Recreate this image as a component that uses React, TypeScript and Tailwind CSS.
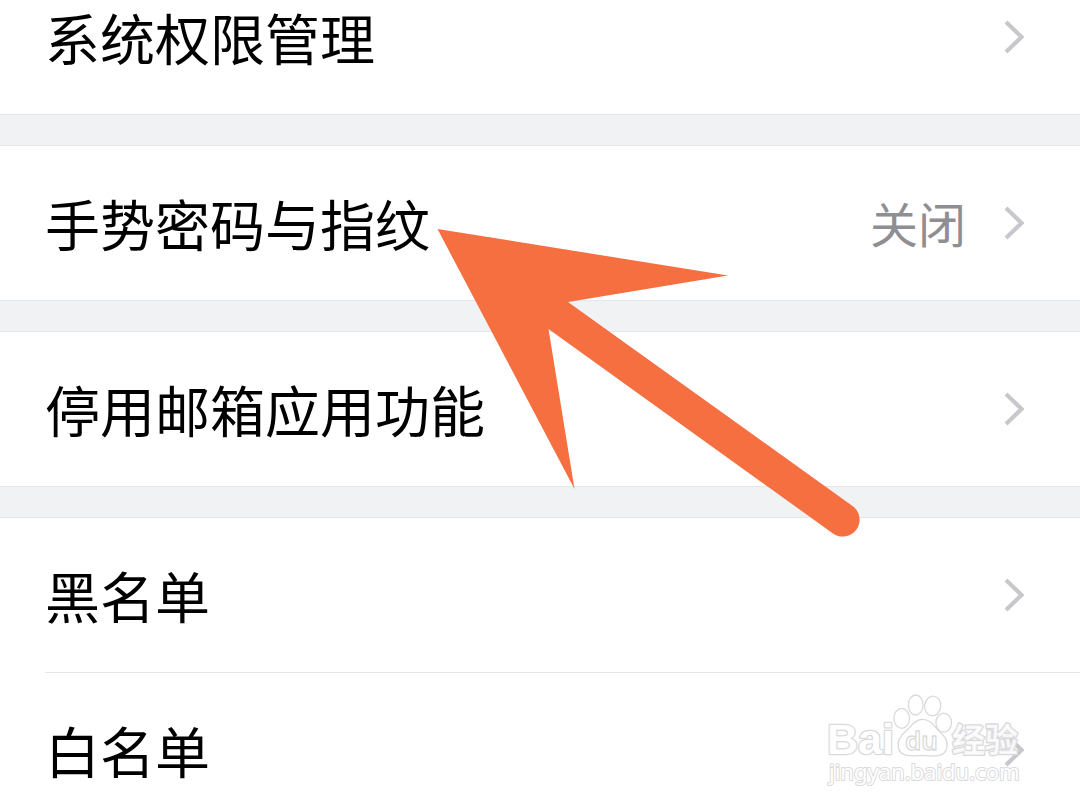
type Item = { label: string; value?: string };

const groups: Item[][] = [
  [{ label: "系统权限管理" }],
  [{ label: "手势密码与指纹", value: "关闭" }],
  [{ label: "停用邮箱应用功能" }],
  [{ label: "黑名单" }, { label: "白名单" }],
];

function Chevron() {
  return (
    <svg className="h-9 w-6 shrink-0" viewBox="0 0 24 36" fill="none" aria-hidden="true">
      <path d="M4 3 L19.500 18 L4 33" stroke="#c7c7cc" strokeWidth="4.200" />
    </svg>
  );
}

function Row({ label, value, height }: Item & { height: string }) {
  return (
    <li className="pl-[45px]">
      <button type="button" className={"flex w-full items-center pr-[54px] text-left " + height}>
        <span className="grow pb-0.5 text-[55px] leading-[72px] text-black">{label}</span>
        {value && <span className="mr-9 pb-0.5 text-[48px] leading-[72px] text-[#8e8e93]">{value}</span>}
        <Chevron />
      </button>
    </li>
  );
}

function Arrow() {
  return (
    <svg
      className="pointer-events-none absolute left-[437px] top-[228px] h-[310px] w-[424px]"
      viewBox="437 228 424 310"
      aria-hidden="true"
    >
      <path
        d="M437.500 229 L728 275.500 L568 302 L852.500 506 A16.700 16.700 0 0 1 833 533.500 L548.500 329 L574.500 489 Z"
        fill="#f66f40"
      />
    </svg>
  );
}

function Watermark() {
  return (
    <svg
      className="pointer-events-none absolute right-[50px] top-[690px] h-[104px] w-[210px]"
      viewBox="820 690 210 104"
      fill="#ffffff"
      fillOpacity="0.8"
      stroke="#dadadc"
      strokeWidth="1.300"
      strokeLinejoin="round"
      fontFamily='"Liberation Sans", "Noto Sans CJK SC", sans-serif'
    >
      <g strokeWidth="2.600" fontWeight="700" paintOrder="stroke" fillOpacity="1">
        <text x="827" y="754" fontSize="43">Bai</text>
        <text x="952" y="752" fontSize="33" fontFamily='"Noto Sans CJK SC", sans-serif' fillOpacity="0.8">经验</text>
      </g>
      <ellipse cx="901.700" cy="718.300" rx="7.800" ry="10" />
      <ellipse cx="915.700" cy="705" rx="7.300" ry="10" />
      <ellipse cx="932.700" cy="706" rx="8" ry="9.800" transform="rotate(8 932.700 706)" />
      <ellipse cx="943.700" cy="722.700" rx="7.800" ry="9.500" />
      <path d="M922.500 719.300 C915 719.300 911.500 726 907 730 C901 735 897 741 898.300 747.500 C900.500 757.500 911 756 922.500 755.500 C933 756 944.500 758 946.800 748 C948.500 740 943.500 735 938.500 730.500 C934 726 930.500 719.300 922.500 719.300 Z" />
      <g fontFamily='"Noto Sans", sans-serif' fillOpacity="1">
        <text x="905" y="750" fontSize="26" fontWeight="600">du</text>
        <text x="829" y="780" fontSize="22" strokeWidth="2" paintOrder="stroke">
          jingyan.baidu.com
        </text>
      </g>
    </svg>
  );
}

export default function App() {
  return (
    <main className="relative h-screen overflow-hidden bg-white font-['Noto_Sans_CJK_SC',sans-serif]">
      <div className="flex flex-col">
        {groups.map((items, g) => (
          <section key={g}>
            {g > 0 && <div className="h-8 border-y border-[#e4e5e7] bg-[#f1f2f4]" />}
            <ul>
              {items.map((item, i) => (
                <Row
                  key={item.label}
                  {...item}
                  height={g === 0 ? "h-[114px] pb-10" : i > 0 ? "h-[155px] border-t border-[#e6e6e8]" : "h-[154px]"}
                />
              ))}
            </ul>
          </section>
        ))}
      </div>
      <Arrow />
      <Watermark />
    </main>
  );
}
